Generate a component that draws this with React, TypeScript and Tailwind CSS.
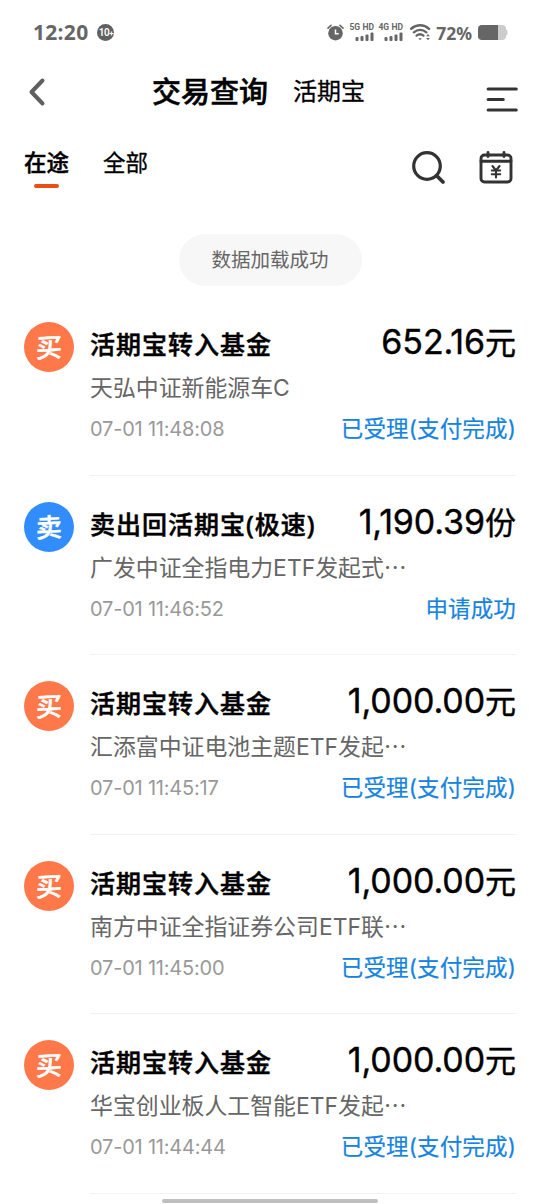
import React from "react";

type Order = {
  kind: "buy" | "sell";
  title: string;
  amount: string;
  unit: string;
  fund: string;
  time: string;
  status: string;
};

const orders: Order[] = [
  { kind: "buy", title: "活期宝转入基金", amount: "652.16", unit: "元", fund: "天弘中证新能源车C", time: "07-01 11:48:08", status: "已受理(支付完成)" },
  { kind: "sell", title: "卖出回活期宝(极速)", amount: "1,190.39", unit: "份", fund: "广发中证全指电力ETF发起式⋯", time: "07-01 11:46:52", status: "申请成功" },
  { kind: "buy", title: "活期宝转入基金", amount: "1,000.00", unit: "元", fund: "汇添富中证电池主题ETF发起⋯", time: "07-01 11:45:17", status: "已受理(支付完成)" },
  { kind: "buy", title: "活期宝转入基金", amount: "1,000.00", unit: "元", fund: "南方中证全指证券公司ETF联⋯", time: "07-01 11:45:00", status: "已受理(支付完成)" },
  { kind: "buy", title: "活期宝转入基金", amount: "1,000.00", unit: "元", fund: "华宝创业板人工智能ETF发起⋯", time: "07-01 11:44:44", status: "已受理(支付完成)" },
];

function Signal({ label }: { label: string }) {
  return (
    <div className="flex w-[25px] flex-col items-end">
      <span className="whitespace-nowrap font-['Roboto',sans-serif] text-[8.5px] font-bold leading-[8px] tracking-[0.1px]">{label}</span>
      <svg className="mt-px h-[9px] w-[19px]" viewBox="0 0 19 9" fill="currentColor">
        <rect x="0.5" y="5" width="3" height="4" rx="1" />
        <rect x="5.5" y="4" width="3" height="5" rx="1" />
        <rect x="10.5" y="2.5" width="3" height="6.5" rx="1" />
        <rect x="15.5" y="0.5" width="3" height="8.5" rx="1" />
      </svg>
    </div>
  );
}

function StatusBar() {
  return (
    <div className="flex h-16 items-center pl-[33px] pr-[32px] text-[#666]">
      <span className="text-[21px] font-bold leading-none tracking-[0.3px]">12:20</span>
      <span className="ml-[9px] flex size-[17px] items-center justify-center rounded-full bg-[#606060] font-['Roboto',sans-serif] text-[10px] font-semibold tracking-[-0.5px] text-white">
        10<span className="mt-1 text-[8px]">+</span>
      </span>
      <div className="ml-auto flex items-center">
        <svg className="mr-px size-[17px]" viewBox="0 0 17 17">
          <circle cx="8.5" cy="9.2" r="7.3" fill="currentColor" />
          <path d="M1 4.2 4 1.4M16 4.2 13 1.4" stroke="currentColor" strokeWidth="1.6" strokeLinecap="round" />
          <path d="M8.5 5.5v4.2h3.2" fill="none" stroke="#fff" strokeWidth="1.5" />
        </svg>
        <div className="ml-1 flex gap-1">
          <Signal label="5G HD" />
          <Signal label="4G HD" />
        </div>
        <svg className="ml-[7px] h-[17px] w-[21px]" viewBox="0 0 21 17" fill="none" stroke="currentColor" strokeLinecap="round">
          <path d="M1.2 4.8C6.5.2 14 .2 19 4.8" strokeWidth="2.5" />
          <path d="M3.8 8.3c3.7-3.3 9-3.3 12.6 0" strokeWidth="2.4" />
          <path d="M6.6 11.6c2.2-1.9 4.6-1.9 6.8 0" strokeWidth="2.4" />
          <path d="m8.3 14.2 1.8 2 1.8-2z" fill="currentColor" stroke="none" />
          <path d="m16.2 12.3 1.8-2.3 1.8 2.3zM16.2 14l1.8 2.3 1.8-2.3z" fill="currentColor" stroke="none" />
        </svg>
        <span className="ml-[5px] mt-[3px] text-[17.5px] font-bold leading-none">72%</span>
        <svg className="ml-[6px] mt-px h-[15px] w-[30px]" viewBox="0 0 30 16" preserveAspectRatio="none">
          <path d="M20 0h4q4 0 4 4v.6q1.6.8 1.6 3.4T28 11.400V12q0 4-4 4h-4z" fill="#ccc" />
          <path d="M4 0h16v16H4q-4 0-4-4V4q0-4 4-4z" fill="currentColor" />
        </svg>
      </div>
    </div>
  );
}

function Header() {
  return (
    <header className="flex h-[66px] items-start text-black">
      <svg className="ml-7 mt-[13px] h-[30px] w-[18px]" viewBox="0 0 18 30" fill="none" stroke="#606060" strokeWidth="4" strokeLinecap="round" strokeLinejoin="round">
        <path d="M14.500 3.500 3.500 15l11 11.500" />
      </svg>
      <h1 className="ml-[106px] mt-[8px] text-[29px] font-medium leading-10 [-webkit-text-stroke:0.5px]">交易查询</h1>
      <span className="ml-[25px] mt-[7px] text-[24px] leading-10 [-webkit-text-stroke:0.3px]">活期宝</span>
      <svg className="ml-auto mr-[22px] mt-[22px] h-[26px] w-8" viewBox="0 0 32 26" fill="none" stroke="#333" strokeWidth="3.200" strokeLinecap="round">
        <path d="M2.200 3h28M2.200 13.500h15M2.200 24h28" />
      </svg>
    </header>
  );
}

function Tabs() {
  return (
    <nav className="flex h-[70px] items-start pl-6 pr-[27px] text-[22.5px] leading-8 text-black">
      <div className="mt-[17px] flex flex-col items-center">
        <span className="font-medium [-webkit-text-stroke:0.4px]">在途</span>
        <span className="mt-[5px] h-1 w-[25px] rounded-full bg-[#ea4f12]" />
      </div>
      <span className="ml-[34px] mt-[17px] [-webkit-text-stroke:0.3px]">全部</span>
      <svg className="ml-auto mt-5 size-[35px]" viewBox="0 0 35 35" fill="none" stroke="#333" strokeWidth="3.200" strokeLinecap="round">
        <circle cx="16" cy="16" r="13.300" />
        <path d="m26 26 6 6" strokeWidth="3.800" />
      </svg>
      <svg className="ml-[33px] mt-[21px] h-[34px] w-[34px]" viewBox="0 0 34 34" fill="none" stroke="#333" strokeWidth="2.900" strokeLinecap="round">
        <rect x="2" y="4" width="30" height="27" rx="3.500" />
        <path d="M2 10.300h30M9 1.500v4M25 1.500v4" />
        <path d="m13.500 15 3.500 4.500 3.500-4.500M17 19.500v7M12.800 19.500h8.400M12.800 23.200h8.400" strokeWidth="2.100" />
      </svg>
    </nav>
  );
}

function OrderRow({ order }: { order: Order }) {
  const buy = order.kind === "buy";
  return (
    <li className="flex h-[179.5px] pl-6 pr-6">
      <div
        className={
          "mt-[26px] flex size-[50px] shrink-0 items-center justify-center rounded-full text-[26px] font-medium text-white [-webkit-text-stroke:0.5px] " +
          (buy ? "bg-[#ff784a]" : "bg-[#318dfb]")
        }
      >
        <span className="-rotate-3 -skew-x-3 leading-none">{buy ? "买" : "卖"}</span>
      </div>
      <div className="ml-4 min-w-0 flex-1 border-b border-[#f2f2f2]">
        <div className="mt-[26px] flex h-[44px] items-center justify-between whitespace-nowrap text-black">
          <span className="mt-[2px] text-[25px] font-medium tracking-[1px] [-webkit-text-stroke:0.5px]">{order.title}</span>
          <span className="-mt-[5px] font-['Inter','Noto_Sans_CJK_SC',sans-serif] text-[34px] tracking-[-0.1px] [-webkit-text-stroke:0.4px]">
            {order.amount}
            <span className="text-[31px] tracking-normal">{order.unit}</span>
          </span>
        </div>
        <div className="h-10 whitespace-nowrap font-['Inter','Noto_Sans_CJK_SC',sans-serif] text-[22.9px] leading-[44px] text-[#666]">{order.fund}</div>
        <div className="mt-[2px] flex h-[42px] items-center justify-between whitespace-nowrap font-['Inter','Noto_Sans_CJK_SC',sans-serif]">
          <span className="text-[20px] tracking-[-0.2px] text-[#999]">{order.time}</span>
          <span className="text-[22.5px] tracking-[0.15px] text-[#1683df] [-webkit-text-stroke:0.2px]">{order.status}</span>
        </div>
      </div>
    </li>
  );
}

export default function App() {
  return (
    <div className="relative h-[1204px] w-[540px] overflow-hidden bg-white font-['Noto_Sans','Noto_Sans_CJK_SC',sans-serif]">
      <StatusBar />
      <Header />
      <Tabs />
      <div className="flex h-[96px] justify-center pt-[34px]">
        <div className="flex h-[52px] w-[183px] items-center justify-center rounded-full bg-[#f7f7f7] text-[19.5px] text-[#666]">数据加载成功</div>
      </div>
      <ul>
        {orders.map((order) => (
          <OrderRow key={order.time} order={order} />
        ))}
      </ul>
      <div className="absolute left-[162px] top-[1199px] h-1 w-[216px] rounded-full bg-[#bfbfbf]" />
    </div>
  );
}
